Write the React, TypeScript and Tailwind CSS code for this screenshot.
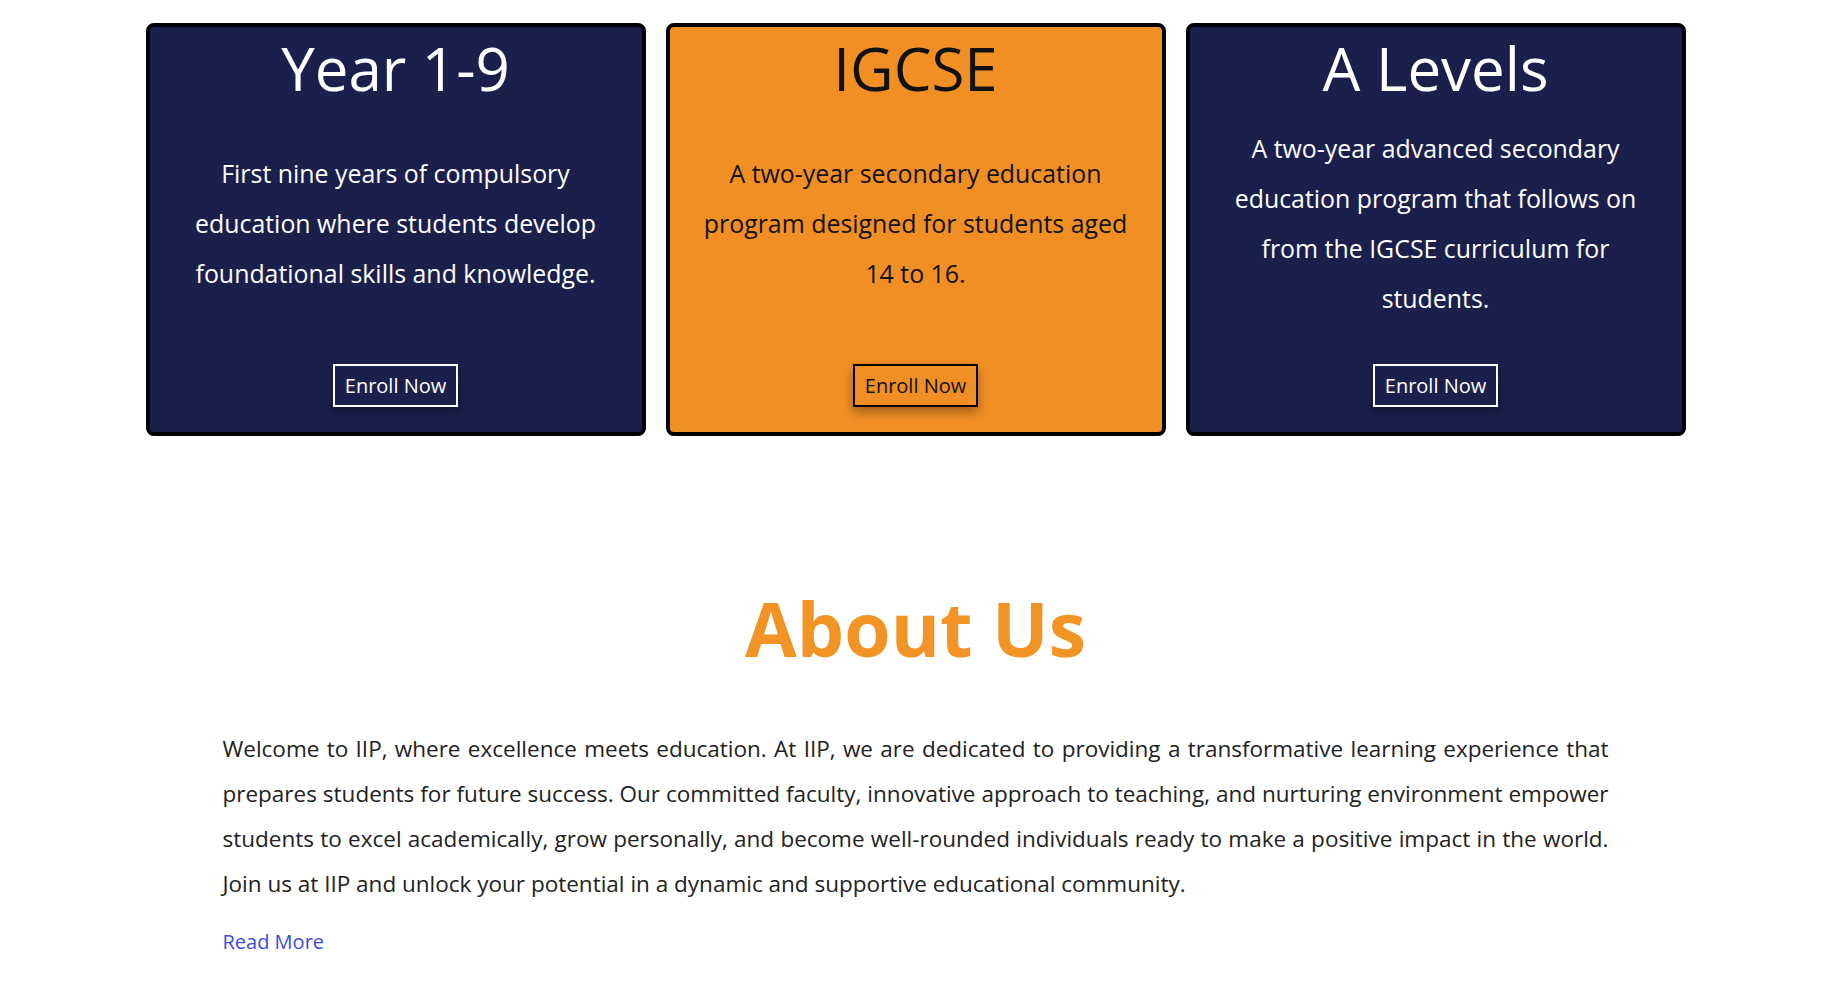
import React from "react";

type Card = {
  title: string;
  text: string;
  dark: boolean;
};

const cards: Card[] = [
  {
    title: "Year 1-9",
    text: "First nine years of compulsory education where students develop foundational skills and knowledge.",
    dark: true,
  },
  {
    title: "IGCSE",
    text: "A two-year secondary education program designed for students aged 14 to 16.",
    dark: false,
  },
  {
    title: "A Levels",
    text: "A two-year advanced secondary education program that follows on from the IGCSE curriculum for students.",
    dark: true,
  },
];

function ProgramCard({ card }: { card: Card }) {
  const dark = card.dark;
  return (
    <div
      className={
        dark
          ? "flex h-[413px] flex-col items-center rounded-[8px] border-[4.5px] border-black bg-[#1b1f4c] px-[22px] text-center text-white"
          : "flex h-[413px] flex-col items-center rounded-[8px] border-[4.5px] border-black bg-[#f18f24] px-[22px] text-center text-[#111111]"
      }
    >
      <h2 className="text-[60px] font-normal leading-[82px]">{card.title}</h2>
      <div className="flex flex-1 items-center justify-center">
        <p className="text-[24.9px] leading-[50px]">{card.text}</p>
      </div>
      <button
        className={
          dark
            ? "mb-[25px] mt-[27px] border-2 border-white px-[10px] py-[6px] text-[20px] leading-[27px] text-white shadow-[0_5px_10px_rgba(0,0,0,0.35)]"
            : "mb-[25px] mt-[27px] border-2 border-black px-[10px] py-[6px] text-[20px] leading-[27px] text-[#111111] shadow-[0_5px_10px_rgba(0,0,0,0.35)]"
        }
      >
        Enroll Now
      </button>
    </div>
  );
}

export default function App() {
  return (
    <div
      className="min-h-[981px] w-full bg-white pt-[23px]"
      style={{ fontFamily: '"Open Sans", "Noto Sans", sans-serif' }}
    >
      <section className="mx-auto grid w-[1540px] grid-cols-3 gap-[20px]">
        {cards.map((c) => (
          <ProgramCard key={c.title} card={c} />
        ))}
      </section>

      <section className="mx-auto mt-[141px] w-[1386px]">
        <h1 className="text-center text-[75px] font-bold leading-[102px] text-[#f29326]">
          About Us
        </h1>
        <p className="mt-[47px] text-justify text-[22.5px] leading-[45px] text-[#222222]">
          Welcome to IIP, where excellence meets education. At IIP, we are dedicated to providing a
          transformative learning experience that prepares students for future success. Our
          committed faculty, innovative approach to teaching, and nurturing environment empower
          students to excel academically, grow personally, and become well-rounded individuals
          ready to make a positive impact in the world. Join us at IIP and unlock your potential in
          a dynamic and supportive educational community.
        </p>
        <a href="#" className="mt-[22px] inline-block text-[20px] leading-[27px] text-[#3a4be0]">
          Read More
        </a>
      </section>
    </div>
  );
}
